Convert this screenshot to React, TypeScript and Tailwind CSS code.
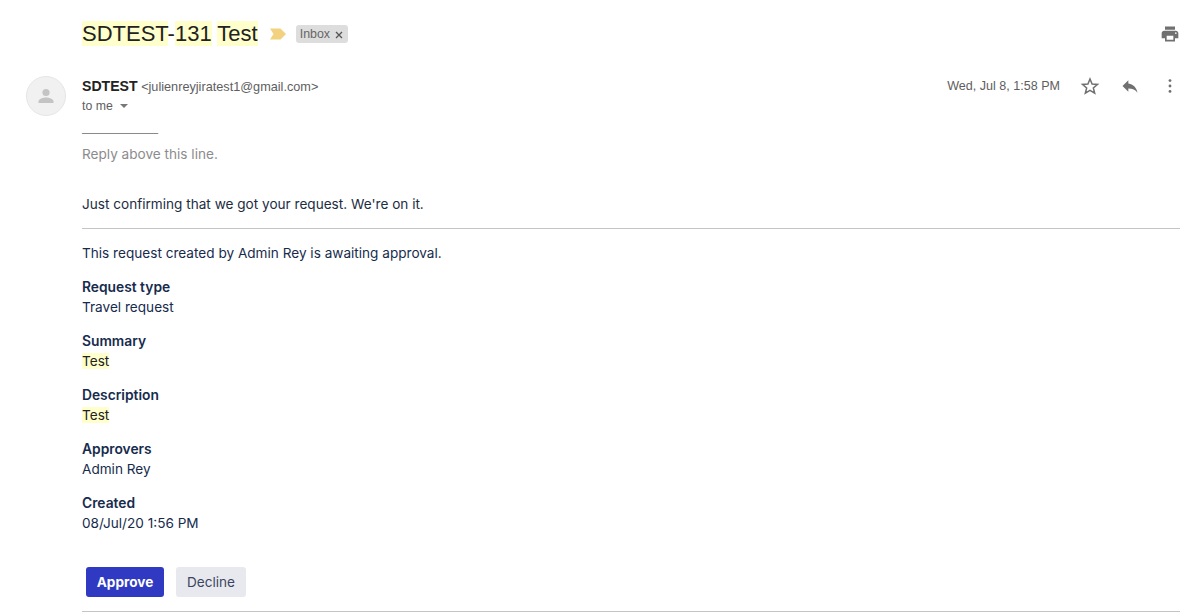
import React from 'react';

const sans = "font-['Liberation_Sans',Arial,sans-serif]";
const mark = 'bg-[#ffffcc]';

function Field({ label, value, highlight }: { label: string; value: string; highlight?: boolean }) {
  return (
    <div className="mt-[10px] h-[44px] leading-[20px]">
      <div className="text-[13.8px] font-semibold">{label}</div>
      <div>{highlight ? <span className={`${mark} text-[#222222]`}>{value}</span> : value}</div>
    </div>
  );
}

export default function App() {
  return (
    <div className="relative h-[614px] w-[1192px] overflow-hidden bg-white text-[#172b4d]">
      <header className={`flex h-[67px] items-center pl-[82px] pr-[12px] ${sans}`}>
        <h1 className="text-[22px] font-normal leading-[23px] text-[#222222]">
          <span className={mark}>SDTEST</span>-<span className={mark}>131</span> <span className={mark}>Test</span>
        </h1>
        <svg className="ml-[12px]" width="16" height="12" viewBox="0 0 16 12">
          <path d="M0 .5h10.5L16 6l-5.5 5.5H0L3.5 6z" fill="#f2d27e" />
        </svg>
        <span className="ml-[10px] flex h-[18px] items-center rounded-[3px] bg-[#dddddd] pl-[4px] pr-[5px] pt-[1px] text-[12.4px] text-[#666666]">
          Inbox
          <svg className="ml-[5px] mt-[1px]" width="8" height="8" viewBox="0 0 8 8">
            <path d="M1 1l6 6M7 1L1 7" stroke="#555555" strokeWidth="1.3" />
          </svg>
        </span>
        <svg className="ml-auto" width="20" height="20" viewBox="0 0 24 24" fill="#707070">
          <path d="M19 8H5c-1.66 0-3 1.34-3 3v6h4v4h12v-4h4v-6c0-1.66-1.34-3-3-3zm-3 11H8v-5h8v5zm3-7c-.55 0-1-.45-1-1s.45-1 1-1 1 .45 1 1-.45 1-1 1zm-1-9H6v4h12V3z" />
        </svg>
      </header>

      <section className={`flex h-[49px] pl-[26px] pr-[12px] ${sans}`}>
        <div className="mt-[9px] flex h-[40px] w-[40px] shrink-0 items-center justify-center rounded-full border border-[#e6e6e6] bg-[#f1f1f1]">
          <svg width="20" height="20" viewBox="0 0 20 20" fill="#c4c4c4">
            <circle cx="10" cy="6.5" r="3.6" />
            <path d="M2.5 17v-1.6c0-2.7 5-4 7.5-4s7.5 1.3 7.5 4V17z" />
          </svg>
        </div>
        <div className="ml-[16px] pt-[10px]">
          <div className="text-[12.7px] leading-[18px] text-[#5e5e5e]">
            <span className="text-[14.1px] font-bold text-[#222222]">SDTEST</span>{' '}
            <span>&lt;julienreyjiratest1@gmail.com&gt;</span>
          </div>
          <div className="mt-[1px] flex items-center text-[12.3px] leading-[18px] text-[#5e5e5e]">
            to me
            <svg className="ml-[7px]" width="8" height="4" viewBox="0 0 8 4">
              <path d="M0 0h8L4 4z" fill="#777777" />
            </svg>
          </div>
        </div>
        <div className="ml-auto mt-[9px] flex h-[20px] items-center self-start text-[12.55px] text-[#5e5e5e]">
          Wed, Jul 8, 1:58 PM
          <svg className="ml-[20px]" width="20" height="20" viewBox="0 0 24 24" fill="none" stroke="#707070" strokeWidth="1.8" strokeLinejoin="miter">
            <path d="M12 3.6l2.5 6 6.5.5-5 4.2 1.6 6.3L12 17.2l-5.6 3.4L8 14.3l-5-4.2 6.5-.5z" />
          </svg>
          <svg className="ml-[20px]" width="20" height="20" viewBox="0 0 24 24" fill="#707070">
            <path d="M10 9V5l-7 7 7 7v-4.1c5 0 8.5 1.6 11 5.1-1-5-4-10-11-11z" />
          </svg>
          <svg className="ml-[20px]" width="20" height="20" viewBox="0 0 24 24" fill="#707070">
            <circle cx="12" cy="5.5" r="1.7" />
            <circle cx="12" cy="12" r="1.7" />
            <circle cx="12" cy="18.5" r="1.7" />
          </svg>
        </div>
      </section>

      <main className="ml-[82px] mr-[12px] font-['Inter',sans-serif] text-[13.6px] leading-[20px]">
        <div className="mt-[7px] text-[13.6px] leading-[20px]">
          <div className="h-[20px] tracking-[-1.1px] text-[#8a8a8a]">——————</div>
          <div className="mt-[1px] text-[#8c8c8c]">Reply above this line.</div>
        </div>
        <p className="mt-[30px] text-[#222c3f]">Just confirming that we got your request. We're on it.</p>
        <hr className="mt-[14px] border-t border-[#c4c4c4]" />
        <p className="mt-[14px]">This request created by Admin Rey is awaiting approval.</p>
        <div className="mt-[14px]">
          <Field label="Request type" value="Travel request" />
          <Field label="Summary" value="Test" highlight />
          <Field label="Description" value="Test" highlight />
          <Field label="Approvers" value="Admin Rey" />
          <Field label="Created" value="08/Jul/20 1:56 PM" />
        </div>
        <div className="ml-[4px] mt-[30px] flex gap-[12px]">
          <button className="h-[30px] w-[78px] rounded-[3px] bg-[#3039c2] font-bold text-white">Approve</button>
          <button className="h-[30px] w-[70px] rounded-[3px] bg-[#e8e9ef] text-[#3b4560]">Decline</button>
        </div>
        <hr className="mt-[14px] border-t border-[#c4c4c4]" />
      </main>
    </div>
  );
}
